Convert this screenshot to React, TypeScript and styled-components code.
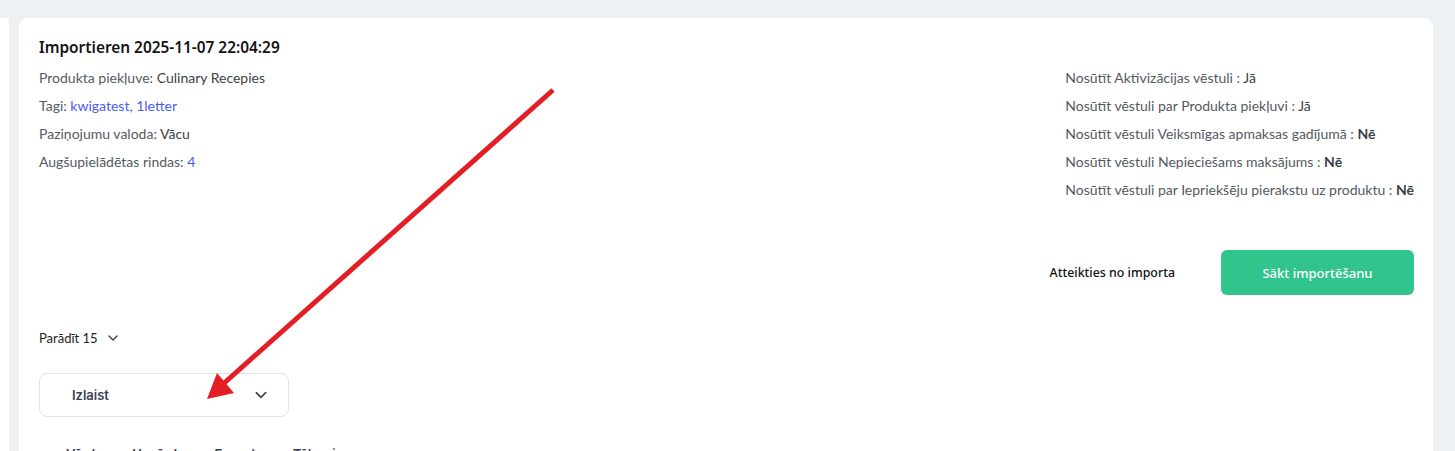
import styled, { createGlobalStyle } from "styled-components";

const GlobalStyle = createGlobalStyle`
  html, body {
    margin: 0;
    padding: 0;
    background: #eef1f3;
    overflow: hidden;
  }
  * {
    box-sizing: border-box;
  }
`;

const Shell = styled.div`
  position: relative;
  height: 451px;
  padding-top: 18px;
  overflow: hidden;
`;

const Row = styled.div`
  display: flex;
  gap: 10px;
  padding-right: 22px;
  height: 100%;
`;

const SideEdge = styled.div`
  width: 9px;
  flex-shrink: 0;
  background: #ffffff;
`;

const Card = styled.section`
  flex: 1;
  background: #ffffff;
  border-radius: 9px 9px 0 0;
  padding: 20px 19px 0 20px;
  height: 600px;
`;

const Top = styled.div`
  display: flex;
  justify-content: space-between;
  align-items: flex-start;
`;

const Title = styled.h2`
  margin: 0 0 6px;
  font-family: "Noto Sans", sans-serif;
  font-weight: 600;
  font-size: 15.4px;
  line-height: 20px;
  color: #141414;
`;

const InfoList = styled.div`
  display: flex;
  flex-direction: column;
`;

const RightList = styled(InfoList)`
  padding-top: 26px;
`;

const InfoLine = styled.div`
  font-family: Lato, sans-serif;
  font-size: 14px;
  line-height: 28px;
  color: #555a5f;
`;

const Value = styled.span<{ $tone?: "link" | "strong" }>`
  color: ${(p) => (p.$tone === "link" ? "#4b5cf5" : "#3c3f44")};
  font-weight: ${(p) => (p.$tone === "strong" ? 700 : 400)};
`;

const Actions = styled.div`
  display: flex;
  justify-content: flex-end;
  align-items: center;
  gap: 46px;
  margin-top: 46px;
`;

const GhostButton = styled.button`
  background: none;
  border: none;
  padding: 0;
  font-family: "Noto Sans", sans-serif;
  font-weight: 500;
  font-size: 12.4px;
  color: #111;
  cursor: pointer;
`;

const PrimaryButton = styled.button`
  width: 193px;
  height: 45px;
  border: none;
  border-radius: 6px;
  background: #31c48d;
  color: #ffffff;
  font-family: "Noto Sans", sans-serif;
  font-weight: 500;
  font-size: 13px;
  cursor: pointer;
`;

const PageSize = styled.div`
  display: flex;
  align-items: center;
  gap: 9px;
  margin-top: 35px;
  font-family: Lato, sans-serif;
  font-size: 13px;
  color: #1e1e1e;
`;

const Select = styled.div`
  width: 250px;
  height: 44px;
  margin-top: 27px;
  border: 1px solid #e2e2ea;
  border-radius: 8px;
  display: flex;
  align-items: center;
  justify-content: space-between;
  padding: 0 20px 0 32px;
  font-family: Inter, sans-serif;
  font-weight: 600;
  font-size: 13px;
  color: #3b4052;
`;

const HeaderRow = styled.div`
  display: flex;
  gap: 30px;
  margin-top: 29px;
  padding-left: 27px;
  font-family: Inter, sans-serif;
  font-weight: 600;
  font-size: 13px;
  color: #3b4052;
`;

const Pointer = styled.svg`
  position: absolute;
  left: 0;
  top: 0;
  pointer-events: none;
`;

const Chevron = ({ size = 12 }: { size?: number }) => (
  <svg width={size} height={size} viewBox="0 0 12 12" fill="none">
    <path d="M2 4l4 4 4-4" stroke="#3b4052" strokeWidth="1.4" strokeLinecap="round" strokeLinejoin="round" />
  </svg>
);

export default function App() {
  return (
    <>
      <GlobalStyle />
      <Shell>
        <Row>
          <SideEdge />
          <Card>
            <Top>
              <InfoList>
                <Title>Importieren 2025-11-07 22:04:29</Title>
                <InfoLine>
                  Produkta piekļuve: <Value>Culinary Recepies</Value>
                </InfoLine>
                <InfoLine>
                  Tagi: <Value $tone="link">kwigatest, 1letter</Value>
                </InfoLine>
                <InfoLine>
                  Paziņojumu valoda: <Value>Vācu</Value>
                </InfoLine>
                <InfoLine>
                  Augšupielādētas rindas: <Value $tone="link">4</Value>
                </InfoLine>
              </InfoList>
              <RightList>
                <InfoLine>
                  Nosūtīt Aktivizācijas vēstuli : <Value>Jā</Value>
                </InfoLine>
                <InfoLine>
                  Nosūtīt vēstuli par Produkta piekļuvi : <Value>Jā</Value>
                </InfoLine>
                <InfoLine>
                  Nosūtīt vēstuli Veiksmīgas apmaksas gadījumā : <Value $tone="strong">Nē</Value>
                </InfoLine>
                <InfoLine>
                  Nosūtīt vēstuli Nepieciešams maksājums : <Value $tone="strong">Nē</Value>
                </InfoLine>
                <InfoLine>
                  Nosūtīt vēstuli par Iepriekšēju pierakstu uz produktu : <Value $tone="strong">Nē</Value>
                </InfoLine>
              </RightList>
            </Top>

            <Actions>
              <GhostButton>Atteikties no importa</GhostButton>
              <PrimaryButton>Sākt importēšanu</PrimaryButton>
            </Actions>

            <PageSize>
              Parādīt 15 <Chevron />
            </PageSize>

            <Select>
              Izlaist <Chevron size={14} />
            </Select>

            <HeaderRow>
              <span>Vārds</span>
              <span>Uzvārds</span>
              <span>E-pasts</span>
              <span>Tālrunis</span>
            </HeaderRow>
          </Card>
        </Row>
        <Pointer width="1455" height="451" viewBox="0 0 1455 451">
          <line x1="553" y1="90" x2="222" y2="385" stroke="#e31e24" strokeWidth="5" />
          <polygon points="207,399 217,373 234,393" fill="#e31e24" />
        </Pointer>
      </Shell>
    </>
  );
}
